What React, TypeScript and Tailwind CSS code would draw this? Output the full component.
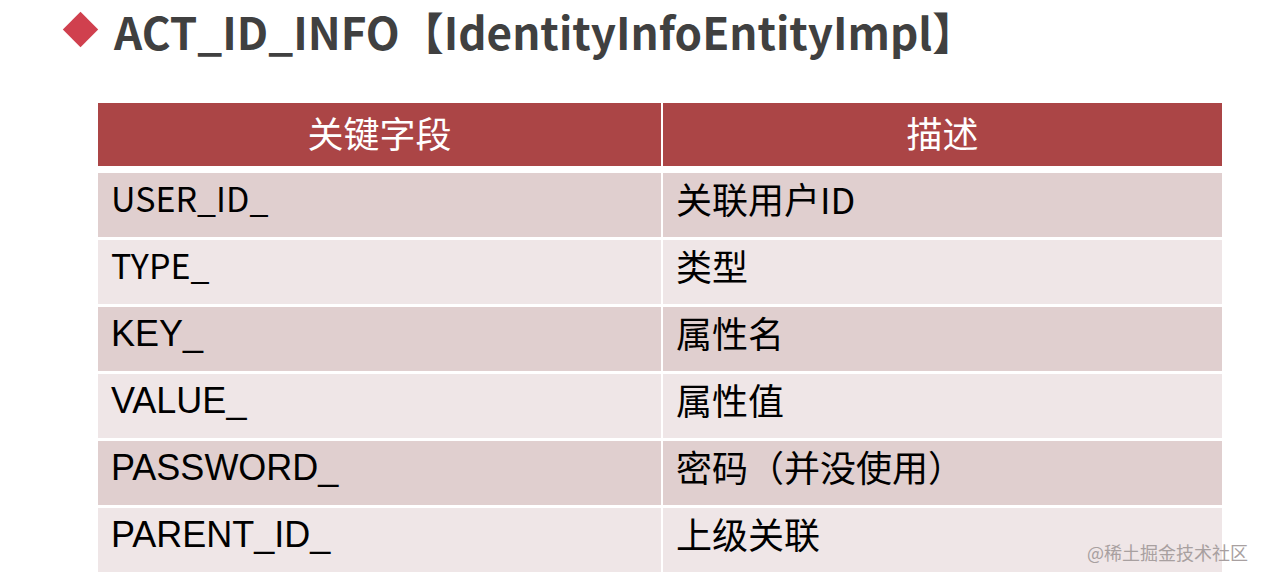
import React from "react";

const rows: { k: string; d: string; dark: boolean; latin: boolean }[] = [
  { k: "USER_ID_", d: "关联用户ID", dark: true, latin: false },
  { k: "TYPE_", d: "类型", dark: false, latin: false },
  { k: "KEY_", d: "属性名", dark: true, latin: true },
  { k: "VALUE_", d: "属性值", dark: false, latin: true },
  { k: "PASSWORD_", d: "密码（并没使用）", dark: true, latin: true },
  { k: "PARENT_ID_", d: "上级关联", dark: false, latin: true },
];

export default function App() {
  return (
    <div className="relative w-[1264px] h-[583px] bg-white overflow-hidden" style={{ fontFamily: '"Noto Sans CJK SC", "Noto Sans", sans-serif' }}>
      <div className="flex items-center h-[64px] pl-[68px]">
        <div className="w-[25px] h-[25px] bg-[#d0404e] rotate-45 mr-[21px] mb-[5px]" />
        <div className="text-[44px] font-bold text-[#404040] leading-[1.45] whitespace-nowrap">
          ACT_ID_INFO【IdentityInfoEntityImpl】
        </div>
      </div>
      <div className="ml-[98px] mt-[39px] w-[1124px] flex flex-col">
        <div className="flex h-[63px] gap-[2px] bg-white">
          <div className="w-[563px] bg-[#ab4546] flex items-center justify-center text-white text-[36px] pb-[6px]">关键字段</div>
          <div className="flex-1 bg-[#ab4546] flex items-center justify-center text-white text-[36px] pb-[6px]">描述</div>
        </div>
        <div className="flex flex-col gap-[3px] mt-[7px]">
          {rows.map((r) => (
            <div key={r.k} className="flex h-[64px] gap-[2px]">
              <div
                className={`w-[563px] flex items-center pl-[13px] text-black ${r.dark ? "bg-[#e0cfcf]" : "bg-[#efe6e7]"} ${r.latin ? "text-[36px] pb-[10px]" : "text-[34px] pb-[16px]"}`}
                style={r.latin ? { fontFamily: '"Liberation Sans", Arial, sans-serif' } : undefined}
              >
                {r.k}
              </div>
              <div className={`flex-1 flex items-center pl-[13px] pb-[14px] text-black text-[36px] ${r.dark ? "bg-[#e0cfcf]" : "bg-[#efe6e7]"}`}>
                {r.d}
              </div>
            </div>
          ))}
        </div>
      </div>
      <div className="absolute left-[1087px] top-[543px] text-[18px] text-[#a8a0a0] leading-none">@稀土掘金技术社区</div>
    </div>
  );
}
